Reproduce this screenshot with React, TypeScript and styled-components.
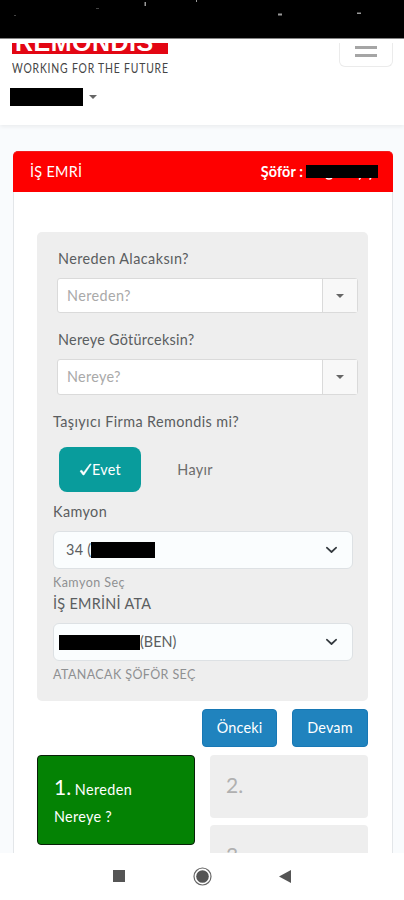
import React from "react";
import styled, { createGlobalStyle } from "styled-components";

const Global = createGlobalStyle`
  * { box-sizing: border-box; }
  body { margin: 0; background: #f8fafc; }
`;

const Screen = styled.div`
  width: 404px;
  height: 900px;
  display: flex;
  flex-direction: column;
  overflow: hidden;
  background: #f9fbfd;
  color: #5a5d60;
  font: 400 14.4px/20px Lato, "Open Sans", sans-serif;
`;

const StatusBar = styled.div`
  height: 39px;
  flex: none;
  background: #000;
  border-bottom: 1px solid #858585;
  svg { display: block; }
`;

const Header = styled.header`
  height: 86px;
  flex: none;
  position: relative;
  z-index: 1;
  background: #fff;
  box-shadow: 0 2px 4px rgba(0, 0, 0, 0.06);
  padding: 4px 11px 0 10px;
`;

const HeaderTop = styled.div`
  display: flex;
  justify-content: space-between;
  align-items: flex-start;
  height: 45px;
`;

const Brand = styled.div`
  padding-left: 2px;
`;

const LogoBand = styled.div`
  width: 156px;
  height: 11px;
  overflow: hidden;
  display: flex;
  align-items: flex-end;
  background: #e30613;
  color: #fff;
`;

const LogoWord = styled.span`
  font: 700 25px/26px "Liberation Sans", sans-serif;
  letter-spacing: 0.5px;
  padding-left: 3px;
  height: 26px;
  margin-bottom: -1px;
`;

const Slogan = styled.div`
  width: 156px;
  margin-top: 6px;
  white-space: nowrap;
  color: #444;
  font: 400 13px/16px Lato, sans-serif;
  letter-spacing: 1px;
  transform: scaleX(0.8);
  transform-origin: 0 50%;
`;

const MenuButton = styled.button`
  width: 54px;
  height: 24px;
  padding: 3px 0 0;
  display: flex;
  flex-direction: column;
  align-items: center;
  gap: 5px;
  background: #fff;
  border: 1px solid #ebebeb;
  border-top: 0;
  border-radius: 0 0 6px 6px;
`;

const MenuLine = styled.span`
  width: 22px;
  height: 3px;
  background: #a5a5a5;
`;

const UserRow = styled.div`
  display: flex;
  align-items: center;
  gap: 6px;
`;

const Redaction = styled.span<{ $w: number; $h: number }>`
  display: block;
  flex: none;
  width: ${(p) => p.$w}px;
  height: ${(p) => p.$h}px;
  background: #000;
`;

const Caret = styled.span`
  border: 4px solid transparent;
  border-top-color: #666;
  border-bottom: 0;
`;

const Main = styled.main`
  flex: none;
  height: 728px;
  overflow: hidden;
  padding: 26px 11px 0 13px;
`;

const Card = styled.section`
  height: 760px;
  background: #fff;
  border: 1px solid #e3e6e9;
  border-top: 0;
  border-radius: 5px 5px 0 0;
`;

const CardHeader = styled.div`
  height: 41px;
  margin: 0 -1px;
  padding: 0 15px 0 17px;
  display: flex;
  align-items: center;
  background: #fe0000;
  color: #fff;
  border-radius: 5px 5px 0 0;
  border: 1px solid #f01c1c;
  border-width: 1px 0 0;
`;

const Driver = styled.div`
  margin-left: auto;
  display: flex;
  align-items: center;
  gap: 3px;
  font-weight: 700;
`;

const CardBody = styled.div`
  padding: 40px 24px 0 23px;
`;

const Panel = styled.div`
  height: 469px;
  padding: 16px 15px 0 16px;
  background: #eee;
  border-radius: 5px;
`;

const Text = styled.span<{ $ls?: number; $size?: number }>`
  white-space: nowrap;
  letter-spacing: ${(p) => p.$ls ?? 0}px;
  font-size: ${(p) => p.$size ?? 14.4}px;
`;

const Label = styled.div<{ $top?: number; $indent?: boolean }>`
  height: 22px;
  line-height: 22px;
  margin-top: ${(p) => p.$top ?? 0}px;
  padding-left: ${(p) => (p.$indent ? 5 : 0)}px;
`;

const Combo = styled.div<{ $top: number; $h: number }>`
  height: ${(p) => p.$h}px;
  margin: ${(p) => p.$top}px -5px 0 4px;
  display: flex;
  background: #fff;
  border: 1px solid #dadada;
  border-radius: 3px;
  color: #a9a9a9;
`;

const ComboValue = styled.div`
  flex: 1;
  padding-left: 9px;
  display: flex;
  align-items: center;
`;

const ComboButton = styled.div`
  width: 35px;
  display: flex;
  align-items: center;
  justify-content: center;
  background: #f8f8f8;
  border-left: 1px solid #dadada;
`;

const Choices = styled.div`
  display: flex;
  align-items: center;
  margin: 14px 0 0 6px;
`;

const Choice = styled.button<{ $on?: boolean }>`
  width: ${(p) => (p.$on ? 82 : 108)}px;
  height: 45px;
  padding: 0;
  border: 0;
  border-radius: 8px;
  display: flex;
  align-items: center;
  justify-content: center;
  font: inherit;
  background: ${(p) => (p.$on ? "#099c9c" : "transparent")};
  color: ${(p) => (p.$on ? "#fff" : "#6c6c6c")};
`;

const Select = styled.div<{ $pad: number }>`
  height: 38px;
  margin-top: 8px;
  padding: 0 14px 0 ${(p) => p.$pad}px;
  display: flex;
  align-items: center;
  background: #fafdfe;
  border: 1px solid #dde1e4;
  border-radius: 6px;
  svg { margin-left: auto; }
`;

const Hint = styled.div<{ $top: number }>`
  height: 18px;
  line-height: 18px;
  margin-top: ${(p) => p.$top}px;
  color: #8e9092;
`;

const Actions = styled.div`
  display: flex;
  justify-content: flex-end;
  gap: 15px;
  margin-top: 8px;
`;

const Action = styled.button<{ $w: number }>`
  width: ${(p) => p.$w}px;
  height: 38px;
  padding: 0;
  border: 1px solid #1878b5;
  border-radius: 4px;
  background: #2083be;
  color: #fff;
  font: inherit;
`;

const Steps = styled.div`
  margin-top: 8px;
  display: grid;
  grid-template-columns: 158px 158px;
  justify-content: space-between;
`;

const StepColumn = styled.div`
  display: flex;
  flex-direction: column;
  gap: 7px;
`;

const Step = styled.div<{ $current?: boolean }>`
  height: ${(p) => (p.$current ? 90 : 63)}px;
  padding: ${(p) => (p.$current ? "17px 16px" : "16px 16px")};
  line-height: 27px;
  border-radius: 4px;
  border: ${(p) => (p.$current ? "1.5px solid #091f09" : "0")};
  background: ${(p) => (p.$current ? "#048204" : "#eee")};
  color: ${(p) => (p.$current ? "#fff" : "#b0b0b0")};
`;

const NavBar = styled.nav`
  flex: 1;
  background: #fff;
  svg { display: block; }
`;

const Chevron = () => (
  <svg width="13" height="8" viewBox="0 0 13 8" fill="none" stroke="#33393e" strokeWidth="1.7" strokeLinecap="round" strokeLinejoin="round">
    <path d="M1.8 1.7 6.5 6l4.700-4.300" />
  </svg>
);

function ComboBox({ text, top, h, ls }: { text: string; top: number; h: number; ls: number }) {
  return (
    <Combo $top={top} $h={h}>
      <ComboValue><Text $ls={ls}>{text}</Text></ComboValue>
      <ComboButton><Caret /></ComboButton>
    </Combo>
  );
}

export default function App() {
  return (
    <Screen>
      <Global />
      <StatusBar>
        <svg width="404" height="38" fill="#999">
          <path d="M144.500 2h1.500v4h-1.500zM196 0h1v2h-1zM278 13.500h4v2h-4zM357 12.500h4v1.500h-4z" />
          <path d="M96 8h3v1h-3zM14 15h2v1h-2z" fill="#444" />
        </svg>
      </StatusBar>
      <Header>
        <HeaderTop>
          <Brand>
            <LogoBand><LogoWord>REMONDIS</LogoWord></LogoBand>
            <Slogan>WORKING FOR THE FUTURE</Slogan>
          </Brand>
          <MenuButton aria-label="Menu"><MenuLine /><MenuLine /></MenuButton>
        </HeaderTop>
        <UserRow><Redaction $w={73} $h={18} /><Caret /></UserRow>
      </Header>
      <Main>
        <Card>
          <CardHeader>
            <Text $ls={0.3}>İŞ EMRİ</Text>
            <Driver>
              <Text $ls={0.1}>Şöför :</Text>
              <svg width="72" height="16" viewBox="0 0 72 16">
                <path d="M20 14q3 2 6 0M54.500 14l-1.500 1.500M65 14l-1.500 1.500" fill="none" stroke="#fff" strokeWidth="1.600" />
                <path d="M0 1h72v13H0z" />
              </svg>
            </Driver>
          </CardHeader>
          <CardBody>
            <Panel>
              <Label $indent><Text $ls={0.43}>Nereden Alacaksın?</Text></Label>
              <ComboBox text="Nereden?" top={8} h={35} ls={0.4} />
              <Label $indent $top={16}><Text $ls={0.27}>Nereye Götürceksin?</Text></Label>
              <ComboBox text="Nereye?" top={8} h={36} ls={0.3} />
              <Label $top={16}><Text $ls={0.4}>Taşıyıcı Firma Remondis mi?</Text></Label>
              <Choices>
                <Choice $on>
                  <svg width="13" height="13" viewBox="0 0 13 13" fill="#fff" stroke="#fff" strokeWidth="0.5"><path d="M1 8 2.800 7.200 4.600 9.400 11 1h1.300L5 12H4z" /></svg>
                  <Text $ls={0.3}>Evet</Text>
                </Choice>
                <Choice><Text $ls={0.3}>Hayır</Text></Choice>
              </Choices>
              <Label $top={9}><Text $ls={0.4}>Kamyon</Text></Label>
              <Select $pad={12}><Text $ls={0.3}>34 (</Text><Redaction $w={64} $h={16} /><Chevron /></Select>
              <Hint $top={4}><Text $size={12.5} $ls={0.45}>Kamyon Seç</Text></Hint>
              <Label $top={2}><Text $ls={0.3}>İŞ EMRİNİ ATA</Text></Label>
              <Select $pad={5}><Redaction $w={81} $h={15} /><Text>(BEN)</Text><Chevron /></Select>
              <Hint $top={4}><Text $size={12.5} $ls={0.4}>ATANACAK ŞÖFÖR SEÇ</Text></Hint>
            </Panel>
            <Actions>
              <Action $w={75}><Text $ls={0.2}>Önceki</Text></Action>
              <Action $w={76}><Text $ls={0.2}>Devam</Text></Action>
            </Actions>
            <Steps>
              <StepColumn>
                <Step $current><Text $size={21}>1.</Text> <Text $ls={0.4}>Nereden</Text><br /><Text $ls={0.3}>Nereye ?</Text></Step>
              </StepColumn>
              <StepColumn>
                <Step><Text $size={21}>2.</Text></Step>
                <Step><Text $size={21}>3.</Text></Step>
              </StepColumn>
            </Steps>
          </CardBody>
        </Card>
      </Main>
      <NavBar>
        <svg width="404" height="47" fill="#555">
          <path d="M113 17h12v12h-12zM291 17v13l-12-6.500z" />
          <circle cx="202.500" cy="23.500" r="6.300" />
          <circle cx="202.500" cy="23.500" r="8.500" fill="none" stroke="#666" strokeWidth="1.200" />
        </svg>
      </NavBar>
    </Screen>
  );
}
